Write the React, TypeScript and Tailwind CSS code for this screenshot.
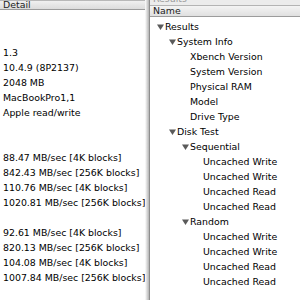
import React from 'react';

const detailRows: string[] = [
  '',
  '',
  '1.3',
  '10.4.9 (8P2137)',
  '2048 MB',
  'MacBookPro1,1',
  'Apple read/write',
  '',
  '',
  '88.47 MB/sec [4K blocks]',
  '842.43 MB/sec [256K blocks]',
  '110.76 MB/sec [4K blocks]',
  '1020.81 MB/sec [256K blocks]',
  '',
  '92.61 MB/sec [4K blocks]',
  '820.13 MB/sec [256K blocks]',
  '104.08 MB/sec [4K blocks]',
  '1007.84 MB/sec [256K blocks]',
];

type TreeRow = { label: string; level: number; open?: boolean };

const treeRows: TreeRow[] = [
  { label: 'Results', level: 0, open: true },
  { label: 'System Info', level: 1, open: true },
  { label: 'Xbench Version', level: 2 },
  { label: 'System Version', level: 2 },
  { label: 'Physical RAM', level: 2 },
  { label: 'Model', level: 2 },
  { label: 'Drive Type', level: 2 },
  { label: 'Disk Test', level: 1, open: true },
  { label: 'Sequential', level: 2, open: true },
  { label: 'Uncached Write', level: 3 },
  { label: 'Uncached Write', level: 3 },
  { label: 'Uncached Read', level: 3 },
  { label: 'Uncached Read', level: 3 },
  { label: 'Random', level: 2, open: true },
  { label: 'Uncached Write', level: 3 },
  { label: 'Uncached Write', level: 3 },
  { label: 'Uncached Read', level: 3 },
  { label: 'Uncached Read', level: 3 },
];

const indent = ['pl-[15px]', 'pl-[28px]', 'pl-[40px]', 'pl-[53px]'];

const Disclosure = () => (
  <svg width="7" height="6" viewBox="0 0 7 6" className="mr-[1px] shrink-0">
    <polygon points="0,0.5 7,0.5 3.5,6" fill="#5a5a5a" />
  </svg>
);

export default function App() {
  return (
    <div
      className="flex h-[300px] w-[300px] overflow-hidden bg-white text-[9.4px] text-black"
      style={{ fontFamily: '"DejaVu Sans", "Liberation Sans", sans-serif' }}
    >
      {/* Detail column */}
      <div className="flex w-[145px] shrink-0 flex-col">
        <div className="flex h-[10px] items-end overflow-hidden border-t border-b border-t-[#b8b8b8] border-b-[#9c9c9c] bg-gradient-to-b from-[#f0f0f0] to-[#dcdcdc] pl-[3px]">
          <span className="leading-[9px] text-[#222]">Detail</span>
        </div>
        <div className="pt-[5px] pl-[3px]">
          {detailRows.map((row, i) => (
            <div key={i} className="h-[15px] whitespace-nowrap leading-[15px]">
              {row}
            </div>
          ))}
        </div>
      </div>

      {/* window shadow */}
      <div className="w-[4px] shrink-0 bg-gradient-to-r from-[#ffffff] to-[#b4b4b4]" />

      {/* Results outline window */}
      <div className="flex flex-1 flex-col border-l border-[#8e8e8e]">
        <div className="h-[6px] overflow-hidden border-b border-[#b4b4b4] bg-[#ececec] pl-[3px]">
          <div className="mt-[-6px] leading-[10px] text-[#9a9a9a]">Results</div>
        </div>
        <div className="flex h-[11px] items-center border-b border-[#9c9c9c] bg-gradient-to-b from-[#f4f4f4] to-[#e0e0e0] pl-[3px]">
          <span className="leading-[10px] text-[#222]">Name</span>
        </div>
        <div className="pt-[2px]">
          {treeRows.map((row, i) => (
            <div
              key={i}
              className={`flex h-[15px] items-center whitespace-nowrap leading-[15px] ${
                row.open ? (row.level === 0 ? 'pl-[7px]' : row.level === 1 ? 'pl-[19px]' : 'pl-[32px]') : indent[row.level]
              }`}
            >
              {row.open && <Disclosure />}
              <span>{row.label}</span>
            </div>
          ))}
        </div>
      </div>
    </div>
  );
}
